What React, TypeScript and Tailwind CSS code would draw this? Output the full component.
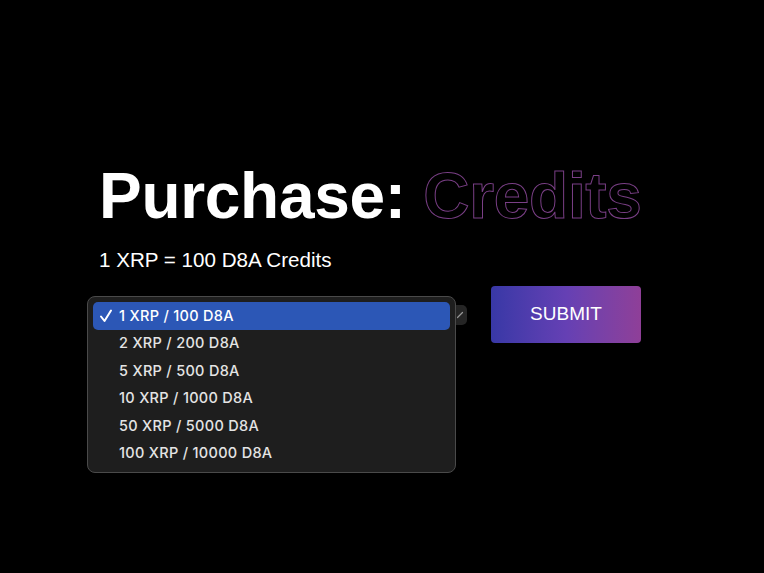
import React from "react";

const options = [
  "1 XRP / 100 D8A",
  "2 XRP / 200 D8A",
  "5 XRP / 500 D8A",
  "10 XRP / 1000 D8A",
  "50 XRP / 5000 D8A",
  "100 XRP / 10000 D8A",
];

const App = () => {
  return (
    <div className="min-h-screen bg-black pt-[164px] pl-[99px] font-['Liberation_Sans',Arial,sans-serif] text-white">
      <h1 className="text-[64px] leading-none font-bold tracking-[-0.3px] whitespace-nowrap">
        Purchase:{" "}
        <span className="text-transparent [-webkit-text-stroke:1px_#7a3f86]">Credits</span>
      </h1>
      <p className="mt-[18px] text-[20.6px] leading-[28px]">1 XRP = 100 D8A Credits</p>

      <div className="mt-[12px] flex items-start gap-[24px]">
        <div className="relative mt-[19px] w-[368px] h-[20px] rounded-[5px] bg-[#262626] flex items-center justify-end pr-[3px]">
          <svg width="8" height="8" viewBox="0 0 8 8" className="text-[#9a9a9a]">
            <path d="M1.5 6.5 L6.5 1.5" stroke="currentColor" strokeWidth="1.2" strokeLinecap="round" />
          </svg>

          <div className="absolute left-[-12px] top-[-9px] w-[369px] h-[177px] rounded-[8px] border border-[#4a4a4a] bg-[#1e1e1e] px-[5px] pt-[5px] shadow-lg">
            {options.map((opt, i) => (
              <div
                key={opt}
                className={`relative flex items-center h-[27.5px] rounded-[5px] pl-[26px] font-['Inter',sans-serif] font-medium text-[14.5px] tracking-[0.3px] ${
                  i === 0 ? "bg-[#2c57b6] text-white" : "text-[#e4e4e4]"
                }`}
              >
                {i === 0 && (
                  <svg width="14" height="14" viewBox="0 0 14 14" className="absolute left-[6px] top-[7px]">
                    <path d="M2 7.5 L5.5 12 L12 1.5" fill="none" stroke="white" strokeWidth="2" strokeLinecap="round" strokeLinejoin="round" />
                  </svg>
                )}
                <span>{opt}</span>
              </div>
            ))}
          </div>
        </div>

        <button
          type="submit"
          className="w-[150px] h-[57px] rounded-[4px] bg-linear-to-r from-[#3838a6] via-[#6540b4] to-[#8f3f98] text-[19px] text-white"
        >
          SUBMIT
        </button>
      </div>
    </div>
  );
};

export default App;
